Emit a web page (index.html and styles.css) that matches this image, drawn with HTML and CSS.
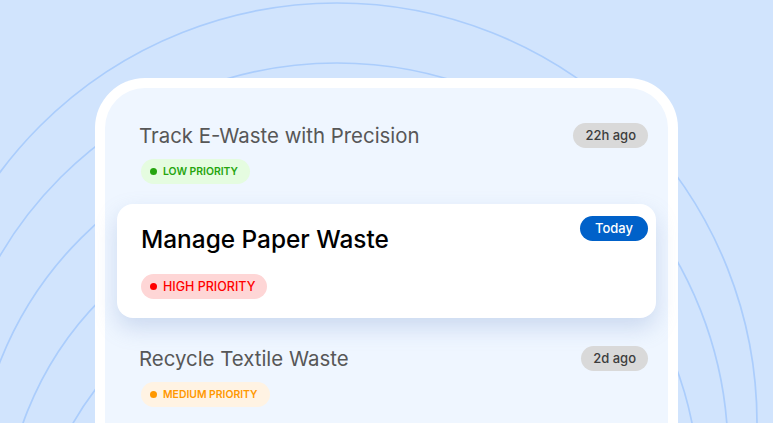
FILE: index.html
```html
<!DOCTYPE html>
<html lang="en">
<head>
<meta charset="utf-8">
<title>Waste tasks</title>
<link rel="stylesheet" href="styles.css">
</head>
<body>
<div class="stage">
  <svg class="ripples" viewBox="0 0 773 423" width="773" height="423" aria-hidden="true">
    <circle cx="337" cy="423" r="420"/>
    <circle cx="337" cy="454" r="391"/>
    <circle cx="337" cy="494" r="362"/>
    <circle cx="337" cy="534" r="333"/>
    <circle cx="337" cy="574" r="304"/>
  </svg>
  <div class="device">
    <div class="screen">
      <div class="item">
        <div class="item-head">
          <span class="title">Track E-Waste with Precision</span>
          <span class="time">22h ago</span>
        </div>
        <span class="badge low"><i class="dot"></i>LOW PRIORITY</span>
      </div>
      <div class="item active">
        <div class="item-head">
          <span class="title">Manage Paper Waste</span>
          <span class="time today">Today</span>
        </div>
        <span class="badge high"><i class="dot"></i>HIGH PRIORITY</span>
      </div>
      <div class="item">
        <div class="item-head">
          <span class="title">Recycle Textile Waste</span>
          <span class="time">2d ago</span>
        </div>
        <span class="badge medium"><i class="dot"></i>MEDIUM PRIORITY</span>
      </div>
    </div>
  </div>
</div>
</body>
</html>
```
FILE: styles.css
```css
* { box-sizing: border-box; }
html, body { margin: 0; padding: 0; }
body {
  font-family: Inter, "Noto Sans", "Liberation Sans", sans-serif;
  background: #d1e4fd;
  overflow: hidden;
}
.stage {
  position: relative;
  width: 773px;
  height: 423px;
  overflow: hidden;
  background: #d1e4fd;
  padding: 78px 0 0 95px;
}
.ripples {
  position: absolute;
  left: 0;
  top: 0;
}
.ripples circle {
  fill: none;
  stroke: #abcdfc;
  stroke-width: 1.7;
}
.device {
  position: relative;
  width: 583px;
  height: 420px;
  background: #ffffff;
  border-radius: 50px;
  padding: 10px;
}
.screen {
  height: 100%;
  background: #eff6ff;
  border-radius: 40px;
  padding-top: 35px;
  display: flex;
  flex-direction: column;
}
.item {
  display: flex;
  flex-direction: column;
  align-items: flex-start;
  padding: 0 20px 0 34px;
}
.item-head {
  width: 100%;
  display: flex;
  justify-content: space-between;
  align-items: center;
}
.title {
  font-size: 20.4px;
  line-height: 25px;
  color: #575757;
  font-weight: 400;
}
.time {
  height: 25px;
  line-height: 25px;
  padding: 0 12px;
  border-radius: 13px;
  background: #d9d9d9;
  color: #3d3d3d;
  font-size: 13px;
  font-weight: 500;
}
.badge {
  margin-top: 11px;
  margin-left: 2px;
  height: 25px;
  display: inline-flex;
  align-items: center;
  gap: 6px;
  padding: 0 12px 0 9px;
  border-radius: 13px;
  font-size: 10.4px;
  font-weight: 600;
}
.dot {
  width: 7px;
  height: 7px;
  border-radius: 50%;
  background: currentColor;
  display: inline-block;
}
.low { background: #e5fce0; color: #26a50f; }
.medium { background: #fff3e3; color: #ff9800; }
.high { background: #fed6d6; color: #ff0000; font-size: 12.5px; font-weight: 500; }

.item + .item { margin-top: 19px; }
.item.active + .item { margin-top: 28px; }

.item.active {
  margin: 20px 12px 0;
  padding: 12px 8px 19px 24px;
  background: #ffffff;
  border-radius: 16px;
  box-shadow: 0 10px 22px rgba(110, 145, 200, 0.28);
}
.item.active .item-head { align-items: flex-start; }
.item.active .title {
  margin-top: 8px;
  font-size: 24.4px;
  line-height: 30px;
  font-weight: 500;
  color: #000000;
}
.item.active .badge { margin-top: 20px; margin-left: 0; }
.today {
  background: #0061c9;
  color: #ffffff;
  padding: 0 15px;
}
```
